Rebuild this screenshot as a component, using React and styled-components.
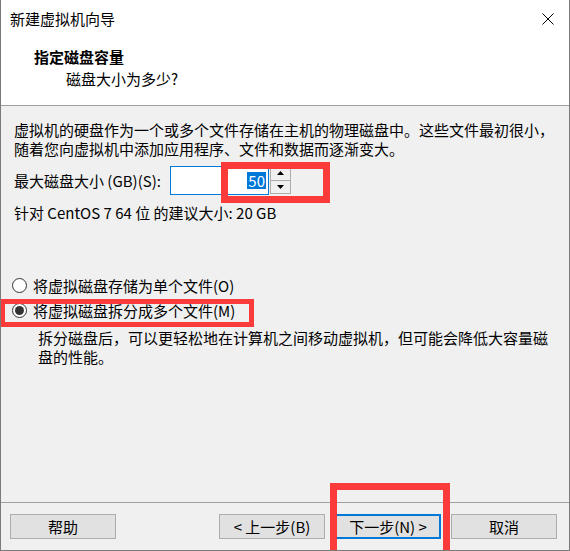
import React from "react";
import styled, { createGlobalStyle } from "styled-components";

const GlobalStyle = createGlobalStyle`
  html, body {
    margin: 0;
    padding: 0;
    background: #f0f0f0;
  }
  body {
    font-family: "Noto Sans CJK SC", "Noto Sans", sans-serif;
    font-size: 15px;
    color: #000;
  }
`;

const Window = styled.div`
  position: relative;
  width: 570px;
  height: 551px;
  box-sizing: border-box;
  border: 1px solid #7a7a7a;
  border-top: none;
  background: #f0f0f0;
  display: flex;
  flex-direction: column;
  overflow: hidden;
`;

const TitleBar = styled.div`
  height: 38px;
  background: #fff;
  display: flex;
  align-items: center;
  justify-content: space-between;
  padding: 0 15px 0 9px;
  line-height: 20px;
`;

const Header = styled.div`
  height: 68px;
  box-sizing: border-box;
  background: #fff;
  border-bottom: 1px solid #a0a0a0;
  padding: 8px 0 0 33px;
  line-height: 22px;
`;

const HeaderTitle = styled.div`
  font-weight: bold;
`;

const HeaderSub = styled.div`
  padding-left: 32px;
`;

const Body = styled.div`
  padding: 14px 13px 0 13px;
  line-height: 19px;
`;

const Para = styled.p`
  margin: 0;
`;

const SizeRow = styled.div`
  margin-top: 8px;
  display: flex;
  align-items: center;
  height: 29px;
`;

const Label = styled.span`
  width: 156px;
  flex: none;
`;

const TextBox = styled.div`
  width: 99px;
  height: 29px;
  box-sizing: border-box;
  border: 1px solid #0078d7;
  background: #fff;
  display: flex;
  align-items: center;
  justify-content: flex-end;
  padding-right: 2px;
`;

const Selected = styled.span`
  background: #0078d7;
  color: #fff;
  line-height: 17px;
  padding: 0 1px;
`;

const Spinner = styled.div`
  width: 21px;
  height: 28px;
  display: flex;
  flex-direction: column;
  margin-left: 1px;
  align-self: flex-start;
`;

const SpinButton = styled.div`
  flex: 1;
  border: 1px solid #adadad;
  background: #f0f0f0;
  display: flex;
  align-items: center;
  justify-content: center;
  & + & {
    border-top: none;
  }
`;

const Hint = styled.div`
  margin-top: 8px;
`;

const RadioGroup = styled.div`
  margin-top: 51px;
`;

const RadioRow = styled.div`
  height: 25px;
  display: flex;
  align-items: center;
  gap: 6px;
  margin-left: -2px;
`;

const RadioCircle = styled.span`
  flex: none;
  width: 15px;
  height: 15px;
  box-sizing: border-box;
  border-radius: 50%;
  border: 1px solid #333;
  background: #fff;
  display: flex;
  align-items: center;
  justify-content: center;
  &::after {
    content: "";
    width: 9px;
    height: 9px;
    border-radius: 50%;
    background: ${(p) => (p.$checked ? "#333" : "transparent")};
  }
`;

const Description = styled.p`
  margin: 5px 0 0 24px;
  width: 510px;
`;

const Footer = styled.div`
  margin-top: auto;
  border-top: 1px solid #a0a0a0;
  padding: 11px 12px 11px 9px;
  display: flex;
  gap: 10px;
`;

const Button = styled.div`
  width: 106px;
  height: 25px;
  box-sizing: border-box;
  background: #e1e1e1;
  border: ${(p) => (p.$primary ? "2px solid #0078d7" : "1px solid #adadad")};
  display: flex;
  align-items: center;
  justify-content: center;
  line-height: 18px;
  margin-left: ${(p) => (p.$push ? "auto" : "0")};
`;

const Mark = styled.div`
  position: absolute;
  box-sizing: border-box;
  border: ${(p) => p.$w}px solid #fb3a3a;
  left: ${(p) => p.$x}px;
  top: ${(p) => p.$y}px;
  width: ${(p) => p.$width}px;
  height: ${(p) => p.$height}px;
  pointer-events: none;
`;

const Arrow = ({ up }) => (
  <svg width="7" height="4" viewBox="0 0 7 4">
    <path d={up ? "M0 4 L3.5 0 L7 4 Z" : "M0 0 L3.5 4 L7 0 Z"} fill="#000" />
  </svg>
);

const CloseIcon = () => (
  <svg width="12" height="12" viewBox="0 0 12 12">
    <path d="M0.5 0.5 L11.5 11.5 M11.5 0.5 L0.5 11.5" stroke="#000" strokeWidth="1" />
  </svg>
);

export default function App() {
  return (
    <>
      <GlobalStyle />
      <Window>
        <TitleBar>
          <span>新建虚拟机向导</span>
          <CloseIcon />
        </TitleBar>
        <Header>
          <HeaderTitle>指定磁盘容量</HeaderTitle>
          <HeaderSub>磁盘大小为多少?</HeaderSub>
        </Header>
        <Body>
          <Para>
            虚拟机的硬盘作为一个或多个文件存储在主机的物理磁盘中。这些文件最初很小，
            <br />
            随着您向虚拟机中添加应用程序、文件和数据而逐渐变大。
          </Para>
          <SizeRow>
            <Label>最大磁盘大小 (GB)(S):</Label>
            <TextBox>
              <Selected>50</Selected>
            </TextBox>
            <Spinner>
              <SpinButton>
                <Arrow up />
              </SpinButton>
              <SpinButton>
                <Arrow />
              </SpinButton>
            </Spinner>
          </SizeRow>
          <Hint>针对 CentOS 7 64 位 的建议大小: 20 GB</Hint>
          <RadioGroup>
            <RadioRow>
              <RadioCircle />
              <span>将虚拟磁盘存储为单个文件(O)</span>
            </RadioRow>
            <RadioRow>
              <RadioCircle $checked />
              <span>将虚拟磁盘拆分成多个文件(M)</span>
            </RadioRow>
            <Description>
              拆分磁盘后，可以更轻松地在计算机之间移动虚拟机，但可能会降低大容量磁盘的性能。
            </Description>
          </RadioGroup>
        </Body>
        <Footer>
          <Button>帮助</Button>
          <Button $push>&lt; 上一步(B)</Button>
          <Button $primary>下一步(N) &gt;</Button>
          <Button>取消</Button>
        </Footer>
        <Mark $x={220} $y={162} $width={109} $height={41} $w={7} />
        <Mark $x={-1} $y={299} $width={254} $height={28} $w={5} />
        <Mark $x={329} $y={483} $width={120} $height={80} $w={7} />
      </Window>
    </>
  );
}
